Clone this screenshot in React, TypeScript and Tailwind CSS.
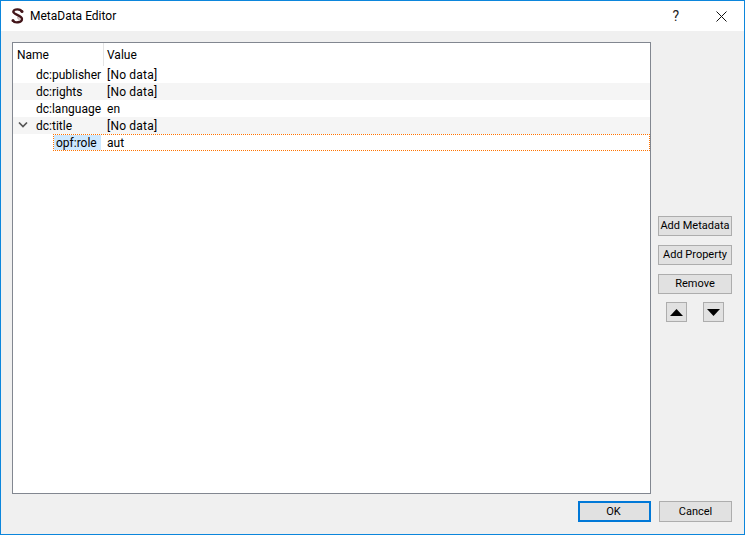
import React from "react";

const font = { fontFamily: 'Roboto, "Open Sans", sans-serif' };

function Row({ name, value, alt, arrow }: { name: string; value: string; alt?: boolean; arrow?: boolean }) {
  return (
    <div className={`flex h-[17px] items-center ${alt ? "bg-[#f5f5f5]" : "bg-white"}`}>
      <div className="flex w-[23px] shrink-0 justify-center">
        {arrow && (
          <svg width="10" height="7" viewBox="0 0 10 7" className="ml-[-3px] mt-[-3px]">
            <path d="M1 1.5 L5 5.5 L9 1.5" fill="none" stroke="#555" strokeWidth="1.7" />
          </svg>
        )}
      </div>
      <div className="w-[71px] shrink-0 whitespace-nowrap text-[12px]">{name}</div>
      <div className="whitespace-nowrap text-[12px] tracking-[0.2px]">{value}</div>
    </div>
  );
}

function Btn({ children, primary, w = "w-[74px]", h = "h-[20px]" }: { children?: React.ReactNode; primary?: boolean; w?: string; h?: string }) {
  return (
    <div
      className={`flex ${w} ${h} items-center justify-center whitespace-nowrap bg-[#e1e1e1] pt-[1px] text-[11px] ${
        primary ? "border-2 border-[#0078d7] pr-[2px]" : "border border-[#adadad]"
      }`}
    >
      {children}
    </div>
  );
}

export default function App() {
  return (
    <div className="flex h-[535px] w-[745px] flex-col border border-[#0c86dc] bg-[#f0f0f0] text-black" style={font}>
      <div className="flex h-[30px] shrink-0 items-center bg-white">
        <svg width="13" height="16" viewBox="0 0 13 16" className="ml-[10px]">
          <path
            d="M10.8 3.6 C9.8 0.8 3.2 0.4 2.3 3.6 C1.6 6.6 11 7.2 11 11 C11 14.8 3.4 15.4 1.9 12.4"
            fill="none"
            stroke="#43161a"
            strokeWidth="2.3"
          />
          <circle cx="11" cy="3.4" r="1.5" fill="#43161a" />
          <circle cx="2" cy="12.4" r="1.5" fill="#43161a" />
          <path d="M6 10 C8 9.4 9 11 7.6 12" fill="none" stroke="#8f6a6a" strokeWidth="0.8" />
        </svg>
        <div className="ml-[6px] text-[12px]">MetaData Editor</div>
        <div className="ml-auto mr-[37px] text-[14px] text-[#222]">?</div>
        <svg width="11" height="11" viewBox="0 0 11 11" className="mr-[17px]">
          <path d="M0.5 0.5 L10.5 10.5 M10.5 0.5 L0.5 10.5" stroke="#111" strokeWidth="1" />
        </svg>
      </div>

      <div className="flex min-h-0 flex-1 pl-[11px] pr-[12px] pt-[11px]">
        <div className="flex h-[452px] w-[639px] flex-col border border-[#828790] bg-white">
          <div className="flex h-[23px] shrink-0 text-[12px]">
            <div className="flex w-[91px] items-center border-r border-[#e5e5e5] pl-[4px]">Name</div>
            <div className="flex items-center pl-[3px]">Value</div>
          </div>
          <Row name="dc:publisher" value="[No data]" />
          <Row name="dc:rights" value="[No data]" alt />
          <Row name="dc:language" value="en" />
          <Row name="dc:title" value="[No data]" alt arrow />
          <div className="ml-[40px] flex h-[17px] items-center p-[1px] [background:repeating-linear-gradient(90deg,#ff7300_0_1px,#fff_1px_2px)_top/100%_1px_no-repeat,repeating-linear-gradient(90deg,#ff7300_0_1px,#fff_1px_2px)_bottom/100%_1px_no-repeat,repeating-linear-gradient(0deg,#ff7300_0_1px,#fff_1px_2px)_left/1px_100%_no-repeat,repeating-linear-gradient(0deg,#ff7300_0_1px,#fff_1px_2px)_right/1px_100%_no-repeat]">
            <div className="flex h-full w-[47px] items-center bg-[#cde8ff] pl-[2px] text-[12px]">opf:role</div>
            <div className="ml-[6px] text-[12px]">aut</div>
          </div>
        </div>

        <div className="ml-[7px] flex w-[74px] flex-col pt-[174px]">
          <div className="flex flex-col gap-[9px]">
            <Btn>Add Metadata</Btn>
            <Btn>Add Property</Btn>
            <Btn>Remove</Btn>
          </div>
          <div className="mt-[8px] flex gap-[16px] pl-[8px]">
            <Btn w="w-[21px]">
              <svg width="13" height="7" viewBox="0 0 13 7"><path d="M6.5 0 L13 7 L0 7 Z" fill="#000" /></svg>
            </Btn>
            <Btn w="w-[21px]">
              <svg width="13" height="7" viewBox="0 0 13 7"><path d="M0 0 L13 0 L6.5 7 Z" fill="#000" /></svg>
            </Btn>
          </div>
        </div>
      </div>

      <div className="flex shrink-0 justify-end gap-[8px] pb-[12px] pr-[12px]">
        <Btn primary w="w-[73px]" h="h-[21px]">OK</Btn>
        <Btn w="w-[73px]" h="h-[21px]">Cancel</Btn>
      </div>
    </div>
  );
}
